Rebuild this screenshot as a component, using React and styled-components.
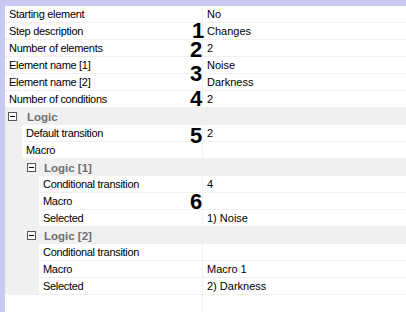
import React from 'react'
import styled, { createGlobalStyle } from 'styled-components'

const GlobalStyle = createGlobalStyle`
  html, body {
    margin: 0;
    padding: 0;
    background: #fff;
  }
  body {
    font-family: "Liberation Sans", Arial, sans-serif;
    font-size: 11px;
    color: #000;
  }
`

const Frame = styled.div`
  box-sizing: border-box;
  position: relative;
  width: 406px;
  height: 312px;
  padding: 6px 0 0 5px;
  background: #c9c9f3;
  display: flex;
  flex-direction: column;
  overflow: hidden;
`

const Grid = styled.div`
  flex: 1;
  display: flex;
  flex-direction: column;
  background: #fff;
`

const Row = styled.div`
  display: grid;
  grid-template-columns: 198px 1fr;
  height: 17px;
`

const Label = styled.div`
  box-sizing: border-box;
  display: flex;
  align-items: center;
  padding-left: ${p => p.$indent}px;
  background: linear-gradient(to right, #f0f0f0 ${p => p.$indent - 4}px, transparent ${p => p.$indent - 4}px);
  border-right: 1px solid #f0f0f0;
  white-space: nowrap;
  letter-spacing: -0.3px;
`

const LabelText = styled.span`
  display: flex;
  align-items: center;
  flex: 1;
  height: 100%;
  margin-left: -4px;
  padding-left: 4px;
  border-bottom: 1px solid #f0f0f0;
  box-sizing: border-box;
`

const Value = styled.div`
  box-sizing: border-box;
  display: flex;
  align-items: center;
  padding-left: 4px;
  border-bottom: 1px solid #f0f0f0;
  white-space: nowrap;
`

const Category = styled.div`
  box-sizing: border-box;
  display: flex;
  align-items: center;
  height: 17px;
  background: #f0f0f0;
  padding-left: ${p => p.$indent}px;
  font-weight: bold;
  font-size: 11.5px;
  color: #6f6f6f;
`

const Toggle = styled.span`
  box-sizing: border-box;
  width: 9px;
  height: 9px;
  border: 1px solid #555;
  position: relative;
  margin-right: ${p => p.$gap}px;
  background: #fff;
  &::after {
    content: '';
    position: absolute;
    left: 1px;
    top: 3px;
    width: 5px;
    height: 1px;
    background: #000;
  }
`

const Filler = styled.div`
  flex: 1;
  display: grid;
  grid-template-columns: 198px 1fr;
`

const FillerLabel = styled.div`
  border-right: 1px solid #f0f0f0;
`

const Marker = styled.div`
  position: absolute;
  left: ${p => p.$x}px;
  top: ${p => p.$y}px;
  font-family: "Liberation Sans", Arial, sans-serif;
  font-weight: bold;
  font-size: 22px;
  line-height: 16px;
  height: 16px;
  color: #000;
`

const rows = [
  { label: 'Starting element', value: 'No', level: 0 },
  { label: 'Step description', value: 'Changes', level: 0 },
  { label: 'Number of elements', value: '2', level: 0 },
  { label: 'Element name [1]', value: 'Noise', level: 0 },
  { label: 'Element name [2]', value: 'Darkness', level: 0 },
  { label: 'Number of conditions', value: '2', level: 0 },
  { category: 'Logic', level: 0 },
  { label: 'Default transition', value: '2', level: 1 },
  { label: 'Macro', value: '', level: 1 },
  { category: 'Logic [1]', level: 1 },
  { label: 'Conditional transition', value: '4', level: 2 },
  { label: 'Macro', value: '', level: 2 },
  { label: 'Selected', value: '1) Noise', level: 2 },
  { category: 'Logic [2]', level: 1 },
  { label: 'Conditional transition', value: '', level: 2 },
  { label: 'Macro', value: 'Macro 1', level: 2 },
  { label: 'Selected', value: '2) Darkness', level: 2 },
]

const labelIndent = [4, 21, 38]
const categoryIndent = [3, 22]
const categoryGap = [10, 8]

const markers = [
  { n: '1', x: 192, y: 23 },
  { n: '2', x: 190, y: 42 },
  { n: '3', x: 190, y: 66 },
  { n: '4', x: 190, y: 91 },
  { n: '5', x: 190, y: 128 },
  { n: '6', x: 190, y: 194 },
]

export default function App() {
  return (
    <>
      <GlobalStyle />
      <Frame>
        <Grid>
          {rows.map((r, i) =>
            r.category ? (
              <Category key={i} $indent={categoryIndent[r.level]}>
                <Toggle $gap={categoryGap[r.level]} />
                {r.category}
              </Category>
            ) : (
              <Row key={i}>
                <Label $indent={labelIndent[r.level]}>
                  <LabelText>{r.label}</LabelText>
                </Label>
                <Value>{r.value}</Value>
              </Row>
            )
          )}
          <Filler>
            <FillerLabel />
            <div />
          </Filler>
        </Grid>
        {markers.map(m => (
          <Marker key={m.n} $x={m.x} $y={m.y}>{m.n}</Marker>
        ))}
      </Frame>
    </>
  )
}
